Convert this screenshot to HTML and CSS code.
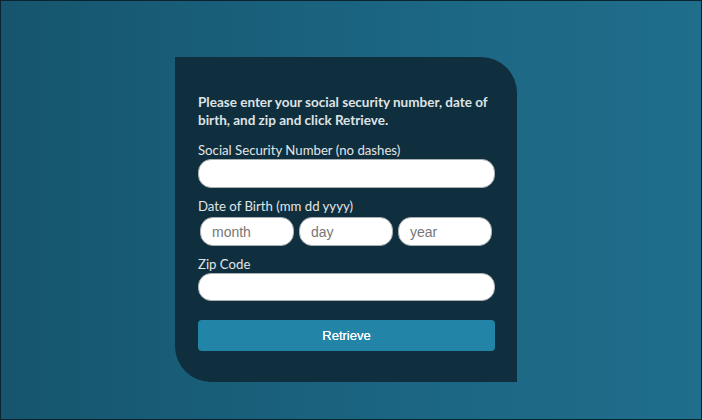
FILE: index.html
```html
<!DOCTYPE html>
<html>
<head>
  <meta name="viewport" content="width=device-width, initial-scale=1">
  <title>Retrieve</title>
  <link rel="stylesheet" href="styles.css">
</head>
<body>
  <div class="page">
    <form class="card">
      <p class="intro">Please enter your social security number, date of birth, and zip and click Retrieve.</p>

      <label class="field-label" for="ssn">Social Security Number (no dashes)</label>
      <input id="ssn" class="text-input" type="text">

      <label class="field-label gap" for="month">Date of Birth (mm dd yyyy)</label>
      <div class="dob-row">
        <input id="month" class="text-input small" type="text" placeholder="month">
        <input class="text-input small" type="text" placeholder="day">
        <input class="text-input small" type="text" placeholder="year">
      </div>

      <label class="field-label gap" for="zip">Zip Code</label>
      <input id="zip" class="text-input zip" type="text">

      <button type="button" class="retrieve">Retrieve</button>
    </form>
  </div>
</body>
</html>
```

FILE: styles.css
```css
html, body {
  margin: 0;
  padding: 0;
}

body {
  font-family: Lato, "Open Sans", sans-serif;
}

.page {
  box-sizing: border-box;
  width: 702px;
  height: 420px;
  border: 1px solid #0b2430;
  background: linear-gradient(90deg, #16556d 0%, #1b6582 55%, #1f6e8b 100%);
  padding: 56px 0 0 174px;
}

.card {
  box-sizing: border-box;
  width: 342px;
  height: 325px;
  background: #0f2f3e;
  border-radius: 0 36px 0 36px;
  padding: 36px 22px 0 23px;
  display: flex;
  flex-direction: column;
}

.intro {
  margin: 0 0 13px;
  font-size: 13.5px;
  font-weight: 700;
  line-height: 18px;
  color: #dfe3e5;
}

.field-label {
  font-size: 13.2px;
  line-height: 16px;
  color: #e2e5e7;
  margin-bottom: 1px;
}

.field-label.gap {
  margin-top: 10px;
}

.text-input {
  box-sizing: border-box;
  width: 100%;
  height: 29px;
  border: 1px solid #a9b0b4;
  border-radius: 13px;
  background: #fff;
  padding: 0 11px;
  font-family: "Liberation Sans", Arial, sans-serif;
  font-size: 14px;
  color: #333;
  outline: none;
}

.text-input.zip {
  height: 28px;
}

.text-input::placeholder {
  color: #767676;
}

.dob-row {
  display: flex;
  gap: 5px;
  margin-top: 2px;
  padding: 0 3px 0 2px;
}

.text-input.small {
  flex: 1;
  min-width: 0;
}

.retrieve {
  margin-top: 19px;
  height: 31px;
  border: none;
  border-radius: 4px;
  background: #2285a8;
  color: #fff;
  font-family: "Liberation Sans", Arial, sans-serif;
  font-size: 13px;
  text-shadow: 0 0 0.4px #fff;
  cursor: pointer;
}
```
